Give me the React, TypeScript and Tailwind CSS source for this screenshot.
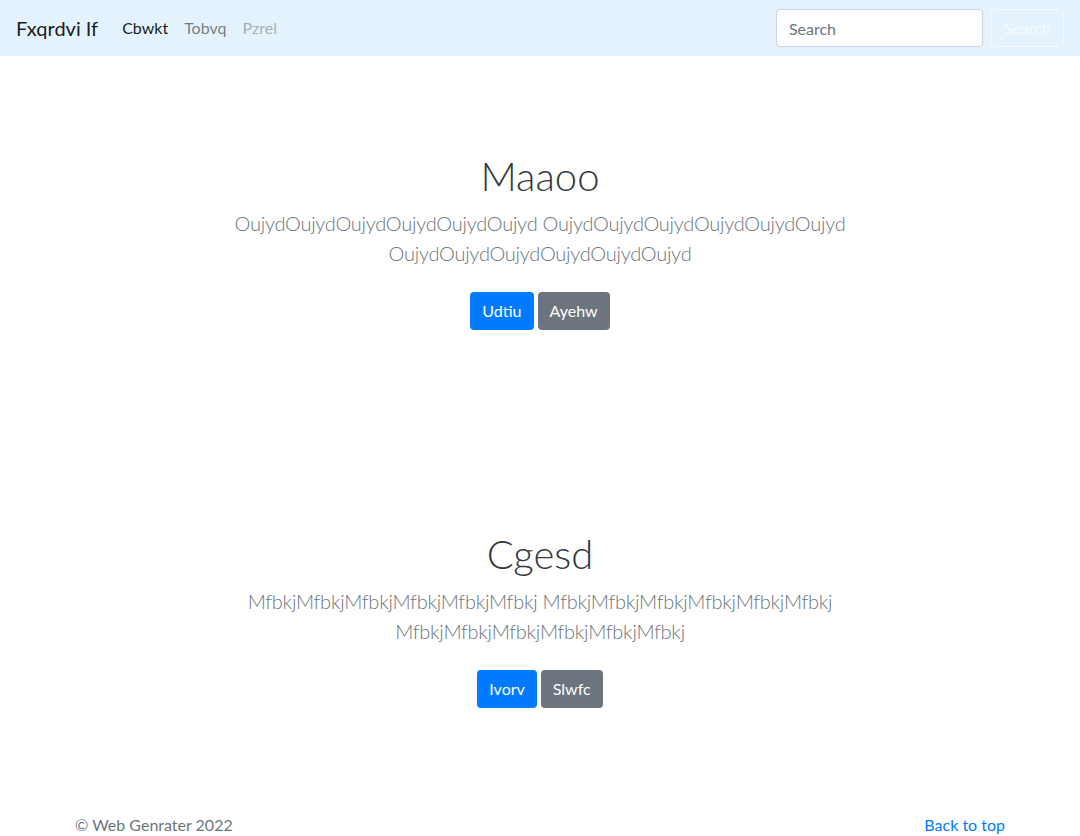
const font = { fontFamily: "Lato, 'Liberation Sans', sans-serif" };

const sections = [
  { title: "Maaoo", word: "Oujyd", primary: "Udtiu", secondary: "Ayehw" },
  { title: "Cgesd", word: "Mfbkj", primary: "Ivorv", secondary: "Slwfc" },
];

function Navbar() {
  return (
    <nav className="flex h-14 items-center bg-[#e3f2fd] px-4">
      <a href="#" className="mr-4 text-[20px] leading-[30px] text-black/90">
        Fxqrdvi If
      </a>
      <ul className="flex">
        <li>
          <a href="#" className="block px-2 py-2 text-base text-black/90">
            Cbwkt
          </a>
        </li>
        <li>
          <a href="#" className="block px-2 py-2 text-base text-black/50">
            Tobvq
          </a>
        </li>
        <li>
          <span className="block px-2 py-2 text-base text-black/30">Pzrel</span>
        </li>
      </ul>
      <form className="ml-auto flex items-center">
        <input
          type="search"
          placeholder="Search"
          className="mr-2 h-[38px] w-[207px] rounded border border-[#ced4da] bg-white px-3 text-base text-[#495057] placeholder:text-[#6c757d]"
          style={font}
        />
        <button
          type="button"
          className="h-[38px] rounded border border-[#f8f9fa] px-3 text-base text-[#f8f9fa]"
          style={font}
        >
          Search
        </button>
      </form>
    </nav>
  );
}

function Hero({ title, word, primary, secondary }: (typeof sections)[number]) {
  const chunk = word.repeat(6);
  return (
    <section className="pt-24 pb-[104px] text-center">
      <div className="mx-auto max-w-[720px] px-[15px]">
        <h1 className="mb-2 text-[40px] font-light leading-[48px] text-[#343a40]">{title}</h1>
        <p className="mb-4 text-[20px] font-light leading-[30px] tracking-[-0.25px] text-[#6c757d]">
          {chunk} {chunk} {chunk}
        </p>
        <div className="flex justify-center gap-1 pt-2">
          <a href="#" className="flex h-[38px] items-center rounded bg-[#007bff] px-3 text-base text-white">
            {primary}
          </a>
          <a href="#" className="flex h-[38px] items-center rounded bg-[#6c757d] px-3 text-base text-white">
            {secondary}
          </a>
        </div>
      </div>
    </section>
  );
}

export default function App() {
  return (
    <div className="min-h-screen bg-white text-[#212529]" style={font}>
      <Navbar />
      <main>
        {sections.map((s) => (
          <Hero key={s.title} {...s} />
        ))}
      </main>
      <footer className="pt-px text-[#6c757d]">
        <div className="mx-auto flex max-w-[960px] justify-between px-[15px] leading-6">
          <p>© Web Genrater 2022</p>
          <a href="#" className="text-[#007bff]">
            Back to top
          </a>
        </div>
      </footer>
    </div>
  );
}
